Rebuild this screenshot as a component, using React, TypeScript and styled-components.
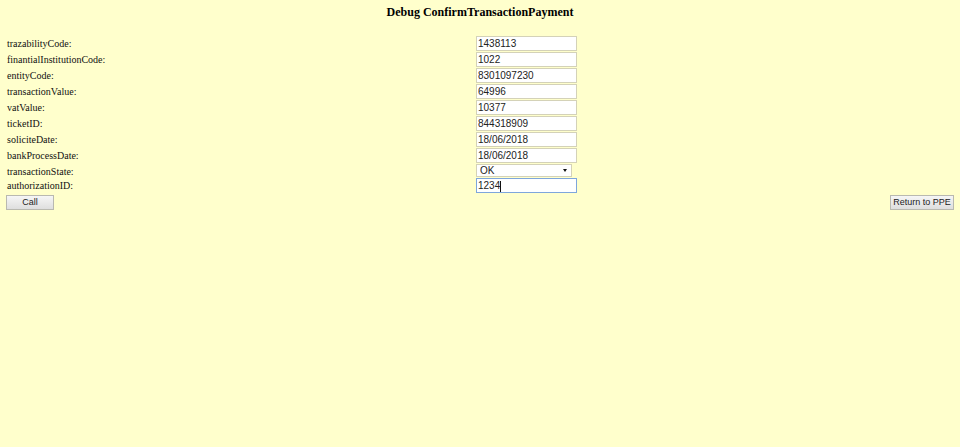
import React from "react";
import styled, { createGlobalStyle } from "styled-components";

const Global = createGlobalStyle`
  html, body { margin: 0; padding: 0; background: #ffffcc; }
  body { font-family: "Liberation Serif", "Times New Roman", serif; }
`;

const Page = styled.div`
  width: 960px;
  height: 447px;
  background: #ffffcc;
`;

const Title = styled.h1`
  margin: 0;
  height: 36px;
  box-sizing: border-box;
  padding-top: 5px;
  text-align: center;
  font-size: 12px;
  font-weight: bold;
  color: #000;
  line-height: 15px;
`;

const Form = styled.div`
  display: grid;
  grid-template-columns: 469px 1fr;
  padding-left: 7px;
`;

const Label = styled.div<{ $h?: number }>`
  height: ${(p) => p.$h ?? 16}px;
  font-size: 10px;
  line-height: 15px;
  color: #111;
  white-space: nowrap;
`;

const Cell = styled.div<{ $h?: number }>`
  height: ${(p) => p.$h ?? 16}px;
`;

const Input = styled.input`
  display: block;
  box-sizing: border-box;
  width: 101px;
  height: 15px;
  margin: 0;
  padding: 0 1px;
  border: 1px solid #d4d2b8;
  background: #fff;
  font-family: "Liberation Sans", Arial, sans-serif;
  font-size: 10px;
  color: #222;
  outline: none;
`;

const Select = styled.div`
  box-sizing: border-box;
  width: 96px;
  height: 13px;
  border: 1px solid #d4d2b8;
  background: #fff;
  display: flex;
  align-items: center;
  justify-content: space-between;
  padding: 0 4px 0 3px;
  font-family: "Liberation Sans", Arial, sans-serif;
  font-size: 10px;
  color: #222;
`;

const Arrow = styled.span`
  width: 0;
  height: 0;
  border-left: 2.5px solid transparent;
  border-right: 2.5px solid transparent;
  border-top: 3px solid #111;
`;

const Caret = styled.span`
  display: inline-block;
  width: 1px;
  height: 11px;
  background: #111;
  vertical-align: middle;
`;

const FakeInput = styled.div`
  box-sizing: border-box;
  width: 101px;
  height: 15px;
  border: 1px solid #7ea6dc;
  background: #fff;
  padding: 0 1px;
  font-family: "Liberation Sans", Arial, sans-serif;
  font-size: 10px;
  line-height: 13px;
  color: #222;
`;

const Buttons = styled.div`
  display: flex;
  justify-content: space-between;
  padding: 1px 6px 0 6px;
`;

const Button = styled.button<{ $w: number }>`
  box-sizing: border-box;
  width: ${(p) => p.$w}px;
  height: 15px;
  margin: 0;
  padding: 0;
  border: 1px solid #b9b9b0;
  background: linear-gradient(#f6f6f6, #dedede);
  font-family: "Liberation Sans", Arial, sans-serif;
  font-size: 9px;
  line-height: 13px;
  color: #222;
  white-space: nowrap;
  overflow: hidden;
`;

const fields: [string, string][] = [
  ["trazabilityCode:", "1438113"],
  ["finantialInstitutionCode:", "1022"],
  ["entityCode:", "8301097230"],
  ["transactionValue:", "64996"],
  ["vatValue:", "10377"],
  ["ticketID:", "844318909"],
  ["soliciteDate:", "18/06/2018"],
  ["bankProcessDate:", "18/06/2018"],
];

export default function App() {
  return (
    <Page>
      <Global />
      <Title>Debug ConfirmTransactionPayment</Title>
      <Form>
        {fields.map(([l, v]) => (
          <React.Fragment key={l}>
            <Label>{l}</Label>
            <Cell>
              <Input defaultValue={v} />
            </Cell>
          </React.Fragment>
        ))}
        <Label $h={14}>transactionState:</Label>
        <Cell $h={14}>
          <Select>
            <span>OK</span>
            <Arrow />
          </Select>
        </Cell>
        <Label>authorizationID:</Label>
        <Cell>
          <FakeInput>
            1234<Caret />
          </FakeInput>
        </Cell>
      </Form>
      <Buttons>
        <Button $w={48}>Call</Button>
        <Button $w={64}>Return to PPE</Button>
      </Buttons>
    </Page>
  );
}
